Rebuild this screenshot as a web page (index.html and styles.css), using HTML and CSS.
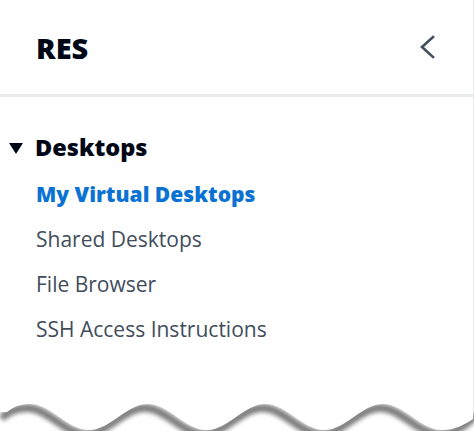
FILE: index.html
```html
<!DOCTYPE html>
<html lang="en">
<head>
<meta charset="utf-8">
<title>RES</title>
<link rel="stylesheet" href="styles.css">
</head>
<body>
<nav class="nav">
  <header class="nav-header">
    <span class="nav-title">RES</span>
    <button class="collapse" aria-label="Close navigation">
      <svg width="18" height="26" viewBox="0 0 18 26" aria-hidden="true"><polyline points="15,3 4,13 15,23" fill="none" stroke="#414d5c" stroke-width="2.6" stroke-linejoin="miter" stroke-linecap="square"/></svg>
    </button>
  </header>
  <section class="group">
    <div class="group-head">
      <svg class="caret" width="16" height="13" viewBox="0 0 16 13" aria-hidden="true"><polygon points="1,1 15,1 8,12" fill="#000716"/></svg>
      <span class="group-title">Desktops</span>
    </div>
    <ul class="links">
      <li><a class="link active" href="#">My Virtual Desktops</a></li>
      <li><a class="link" href="#">Shared Desktops</a></li>
      <li><a class="link" href="#">File Browser</a></li>
      <li><a class="link" href="#">SSH Access Instructions</a></li>
    </ul>
  </section>
</nav>
<svg class="tear" width="474" height="41" viewBox="0 390 474 41" aria-hidden="true">
  <defs>
    <filter id="blur" x="-10%" y="-50%" width="120%" height="200%"><feGaussianBlur stdDeviation="2.2"/></filter>
  </defs>
  <rect x="0" y="390" width="474" height="41" fill="#ffffff"/>
  <line x1="473.5" y1="390" x2="473.5" y2="419" stroke="#e9ebed" stroke-width="1"/>
  <path d="M7 412 C 14 406, 22 404, 30 404 C 51.4 404, 67.5 430, 88.9 430 C 110.3 430, 126.3 404, 147.7 404 C 169.1 404, 185.2 430, 206.6 430 C 228 430, 244 404, 265.4 404 C 286.8 404, 302.9 430, 324.3 430 C 345.7 430, 361.7 404, 383.1 404 C 404.5 404, 420.6 430, 442 430 C 455 430, 466 424, 476 414" fill="none" stroke="#7e7e7e" stroke-width="8" stroke-linecap="round" transform="translate(-3 4)" filter="url(#blur)"/>
  <path d="M0 390 L0 412 L7 412 C 14 406, 22 404, 30 404 C 51.4 404, 67.5 430, 88.9 430 C 110.3 430, 126.3 404, 147.7 404 C 169.1 404, 185.2 430, 206.6 430 C 228 430, 244 404, 265.4 404 C 286.8 404, 302.9 430, 324.3 430 C 345.7 430, 361.7 404, 383.1 404 C 404.5 404, 420.6 430, 442 430 C 455 430, 464 425, 473 419 L473 390 Z" fill="#ffffff"/>
</svg>
</body>
</html>
```
FILE: styles.css
```css
html, body {
  margin: 0;
  padding: 0;
  background: #ffffff;
}
body {
  width: 474px;
  height: 431px;
  overflow: hidden;
  position: relative;
  font-family: "Open Sans", "Noto Sans", sans-serif;
}
.nav {
  width: 473px;
  height: 431px;
  border-right: 1px solid #e9ebed;
}
.nav-header {
  height: 94px;
  border-bottom: 3px solid #e9ebed;
  display: flex;
  align-items: center;
  justify-content: space-between;
  padding: 0 37px 0 36px;
}
.nav-title {
  font-size: 29px;
  font-weight: 800;
  color: #000716;
  line-height: 32px;
  margin-top: 1px;
}
.collapse {
  border: 0;
  background: none;
  padding: 0;
  width: 18px;
  height: 26px;
  display: flex;
  cursor: pointer;
}
.group {
  padding-top: 28px;
}
.group-head {
  display: flex;
  align-items: center;
  height: 45px;
  padding-left: 8px;
  gap: 11px;
}
.caret {
  flex: none;
  margin-top: 1px;
}
.group-title {
  font-size: 23.5px;
  font-weight: 800;
  color: #000716;
  line-height: 45px;
}
.links {
  list-style: none;
  margin: 2px 0 0 0;
  padding: 0 0 0 36px;
}
.links li {
  height: 45px;
  line-height: 45px;
}
.link {
  font-size: 21px;
  color: #414d5c;
  text-decoration: none;
}
.link.active {
  color: #0972d3;
  font-weight: 800;
}
.tear {
  position: absolute;
  left: 0;
  top: 390px;
  pointer-events: none;
}
```
